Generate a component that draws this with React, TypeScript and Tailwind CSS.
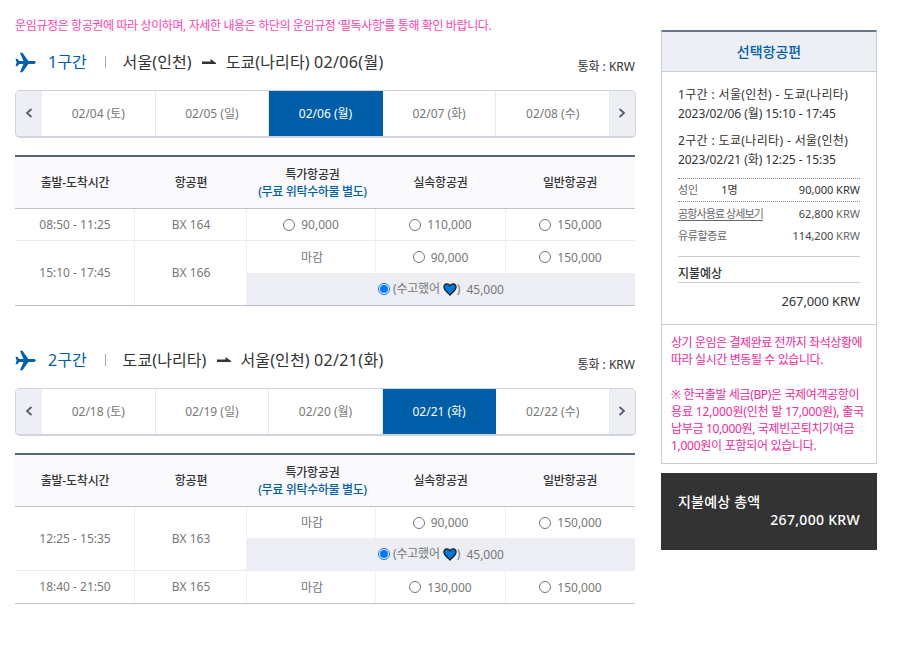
import React, { useState } from 'react'
import clsx from 'clsx'

interface Fare {
    price?: string;
}

interface Flight {
    time: string;
    code: string;
    fares: Fare[];
    promo?: string;
}

interface Section {
    id: number;
    from: string;
    to: string;
    date: string;
    days: string[];
    selectedDay: number;
    flights: Flight[];
}

const sections: Section[] = [
    {
        id: 1,
        from: "서울(인천)",
        to: "도쿄(나리타)",
        date: "02/06(월)",
        days: ["02/04 (토)", "02/05 (일)", "02/06 (월)", "02/07 (화)", "02/08 (수)"],
        selectedDay: 2,
        flights: [
            { time: "08:50 - 11:25", code: "BX 164", fares: [{ price: "90,000" }, { price: "110,000" }, { price: "150,000" }] },
            { time: "15:10 - 17:45", code: "BX 166", fares: [{}, { price: "90,000" }, { price: "150,000" }], promo: "45,000" },
        ],
    },
    {
        id: 2,
        from: "도쿄(나리타)",
        to: "서울(인천)",
        date: "02/21(화)",
        days: ["02/18 (토)", "02/19 (일)", "02/20 (월)", "02/21 (화)", "02/22 (수)"],
        selectedDay: 3,
        flights: [
            { time: "12:25 - 15:35", code: "BX 163", fares: [{}, { price: "90,000" }, { price: "150,000" }], promo: "45,000" },
            { time: "18:40 - 21:50", code: "BX 165", fares: [{}, { price: "130,000" }, { price: "150,000" }] },
        ],
    },
];

const PlaneIcon = () => (
    <svg width="21" height="21" viewBox="0 0 22 22" fill="#0060a9" className="shrink-0">
        <path d="M0.5 7.200h1.800l2.200 2.300h4.400L5.200.8h2.600l6.200 8.700h5.300c1.500 0 2.400.6 2.400 1.500s-.9 1.500-2.400 1.500H14l-6.200 8.700H5.200l3.700-8.700H4.500l-2.200 2.300H.5L1.700 11z" />
    </svg>
)

const RouteArrow = () => (
    <svg width="14" height="6" viewBox="0 0 14 6" fill="#333" className="shrink-0">
        <path d="M0 2.500h8.500V0L14 4v1H0z" />
    </svg>
)

const Heart = () => (
    <svg width="14" height="13" viewBox="0 0 14 13" className="shrink-0">
        <path d="M7 12.100C5.200 10.200 1 7.400.9 4.100.8 2.200 2.100.9 3.800.9 5.200.9 6.400 1.600 7 2.700 7.600 1.600 8.800.9 10.200.9c1.700 0 3 1.300 2.900 3.200C13 7.400 8.800 10.200 7 12.100z" fill="#0078d7" stroke="#111" strokeWidth="1.200" />
    </svg>
)

const Chevron = ({ left }: { left?: boolean }) => (
    <svg width="8" height="10" viewBox="0 0 8 10" fill="none" stroke="#55606b" strokeWidth="1.800">
        <path d={left ? "M6.500 1 2 5l4.500 4" : "M1.500 1 6 5 1.500 9"} />
    </svg>
)

const Radio = ({ checked }: { checked?: boolean }) => (
    <span className={clsx("flex items-center justify-center shrink-0 size-3 rounded-full border bg-white", checked ? "border-[#0075ff]" : "border-[#767676]")}>
        {checked && <span className="size-2 rounded-full bg-[#0075ff]" />}
    </span>
)

interface DateBarProps {
    days: string[];
    selectedDay: number;
}

const DateBar = ({ days, selectedDay }: DateBarProps) => {
    const [selected, setSelected] = useState<number>(selectedDay);

    return (
        <div className="flex h-[48px] rounded-[5px] border border-b-2 border-[#cfd4da] overflow-hidden">
            <button className="flex w-[26px] items-center justify-center bg-[#edeff5] pb-px"><Chevron left /></button>
            {days.map((day, i) => (
                <button
                    key={day}
                    onClick={() => setSelected(i)}
                    className={clsx(
                        "flex-1 pt-px border-r last:border-r-0",
                        selected === i ? "bg-[#005ea8] border-[#005ea8] text-white" : "border-[#e6e9ed] text-[#777]"
                    )}
                >
                    {day}
                </button>
            ))}
            <button className="flex w-[25px] items-center justify-center bg-[#edeff5] pb-px"><Chevron /></button>
        </div>
    )
}

const FareTable = ({ flights }: { flights: Flight[] }) => (
    <div className="mt-[17px] w-[620px] border-t-2 border-[#566777] text-[#777]">
        <div className="grid h-[51px] grid-cols-[120px_112px_129px_129px_130px] items-center bg-[#f9f9fc] text-center font-medium tracking-[-0.2px] text-[#333]">
            <div>출발-도착시간</div>
            <div>항공편</div>
            <div className="pl-0.5 leading-[17px]">
                특가항공권
                <div className="tracking-[-0.35px] text-[#0060a9]">(무료 위탁수하물 별도)</div>
            </div>
            <div>실속항공권</div>
            <div>일반항공권</div>
        </div>
        <div className="border-t border-b border-[#bac3ca]">
            {flights.map((flight, i) => (
                <div key={flight.code} className={clsx("flex", i > 0 && "border-t border-[#e9ebef]")}>
                    <div className="flex w-[120px] items-center justify-center border-r border-[#eef0f3] pl-px">{flight.time}</div>
                    <div className="flex w-[112px] items-center justify-center border-r border-[#eef0f3] pl-px">{flight.code}</div>
                    <div className="flex-1">
                        <div className={clsx("grid grid-cols-[129px_130px_129px]", i > 0 ? "h-[32px]" : "h-[31px]")}>
                            {flight.fares.map((fare, j) => (
                                <div key={j} className={clsx("flex items-center justify-center", j < 2 && "border-r border-[#eef0f3]")}>
                                    {fare.price ? <><Radio /><span className="ml-1.5 pt-px">{fare.price}</span></> : <span className="pl-0.5 pt-px">마감</span>}
                                </div>
                            ))}
                        </div>
                        {flight.promo && (
                            <div className="flex h-[32px] items-center justify-center bg-[#edeef4]">
                                <Radio checked />
                                <span className="ml-[3px] mr-[3px] tracking-[-0.2px]">(수고했어</span>
                                <Heart />
                                <span>)</span>
                                <span className="ml-1.5 pt-px">{flight.promo}</span>
                            </div>
                        )}
                    </div>
                </div>
            ))}
        </div>
    </div>
)

const SectionBlock = ({ section }: { section: Section }) => (
    <section className="h-[298px]">
        <div className="flex h-[40px] items-center text-base text-[#333]">
            <PlaneIcon />
            <span className="ml-3 text-[#0060a9]">{section.id}구간</span>
            <span className="ml-[18px] h-3 w-px bg-[#aaa]" />
            <span className="ml-[17px] tracking-[0.1px]">{section.from}</span>
            <span className="mx-2.5"><RouteArrow /></span>
            <span className="tracking-[0.1px]">{section.to} <span className="tracking-[0.38px]">{section.date}</span></span>
            <span className="ml-auto pr-px pt-[9px] text-xs">통화 : KRW</span>
        </div>
        <div className="mt-2">
            <DateBar days={section.days} selectedDay={section.selectedDay} />
        </div>
        <FareTable flights={section.flights} />
    </section>
)

const Summary = () => (
    <aside className="w-[216px] text-[#333]">
        <div className="h-[434px] border border-t-2 border-[#c9ced6] border-t-[#68788a]">
            <div className="flex h-[40px] items-center justify-center border-b border-[#c9ced6] bg-[#edeff5] text-sm font-medium text-[#0060a9]">선택항공편</div>
            <div className="h-[253px] border-b border-[#c9ced6] px-4 pt-[13px]">
                <div className="whitespace-nowrap leading-[19px]">
                    <p className="tracking-[0.36px]">1구간 : 서울(인천) - 도쿄(나리타)</p>
                    <p className="tracking-[-0.07px]">2023/02/06 (월) 15:10 - 17:45</p>
                    <p className="mt-[8px] tracking-[0.36px]">2구간 : 도쿄(나리타) - 서울(인천)</p>
                    <p className="tracking-[-0.07px]">2023/02/21 (화) 12:25 - 15:35</p>
                </div>
                <div className="mt-[9px] flex h-[24px] items-center border-y border-dotted border-[#888] pt-px text-[11px]">
                    <span className="text-[#666]">성인</span>
                    <span className="ml-[23px]">1명</span>
                    <span className="ml-auto">90,000 KRW</span>
                </div>
                <div className="flex h-[23px] items-center justify-between pt-px text-[11px] text-[#666]">
                    <span className="tracking-[-0.9px] underline underline-offset-2">공항사용료 상세보기</span>
                    <span><span className="text-[#444]">62,800</span> KRW</span>
                </div>
                <div className="flex h-[22px] items-center justify-between pt-px text-[11px] text-[#666]">
                    <span className="tracking-[-0.4px]">유류할증료</span>
                    <span><span className="text-[#444]">114,200</span> KRW</span>
                </div>
                <div className="mt-[9px] flex h-[27px] items-end border-t border-b border-[#c9ced6] font-medium leading-[16px]">지불예상</div>
                <div className="mt-[9px] text-right text-[13px] leading-[18px] tracking-[-0.1px]">267,000 KRW</div>
            </div>
            <div className="whitespace-nowrap px-[9px] pt-[9px] leading-[17.300px] text-[#f0289a]">
                <p className="tracking-[-0.43px]">상기 운임은 결제완료 전까지 좌석상황에</p>
                <p className="tracking-[-0.4px]">따라 실시간 변동될 수 있습니다.</p>
                <p className="mt-[17px] tracking-[-0.37px]">※ 한국출발 세금(BP)은 국제여객공항이</p>
                <p className="tracking-[-0.15px]">용료 12,000원(인천 발 17,000원), 출국</p>
                <p className="tracking-[-0.33px]">납부금 10,000원, 국제빈곤퇴치기여금</p>
                <p className="tracking-[-0.28px]">1,000원이 포함되어 있습니다.</p>
            </div>
        </div>
        <div className="mt-[9px] h-[77px] bg-[#333] pl-[17px] pr-[17px] pt-5 text-sm font-medium leading-[18px] text-white">
            <p className="tracking-[0.2px]">지불예상 총액</p>
            <p className="text-right tracking-[0.3px]">267,000 KRW</p>
        </div>
    </aside>
)

export default function App() {
    return (
        <div className="flex h-[655px] w-[900px] bg-white font-['Noto_Sans','Noto_Sans_CJK_KR',sans-serif] text-xs">
            <main className="ml-[15px] w-[621px] pt-4">
                <p className="h-[26px] pt-px leading-[18px] tracking-[-0.38px] text-[#ff3fae]">운임규정은 항공권에 따라 상이하며, 자세한 내용은 하단의 운임규정 ‘필독사항’를 통해 확인 바랍니다.</p>
                {sections.map((section) => (
                    <SectionBlock key={section.id} section={section} />
                ))}
            </main>
            <div className="ml-[25px] pt-[30px]">
                <Summary />
            </div>
        </div>
    )
}
